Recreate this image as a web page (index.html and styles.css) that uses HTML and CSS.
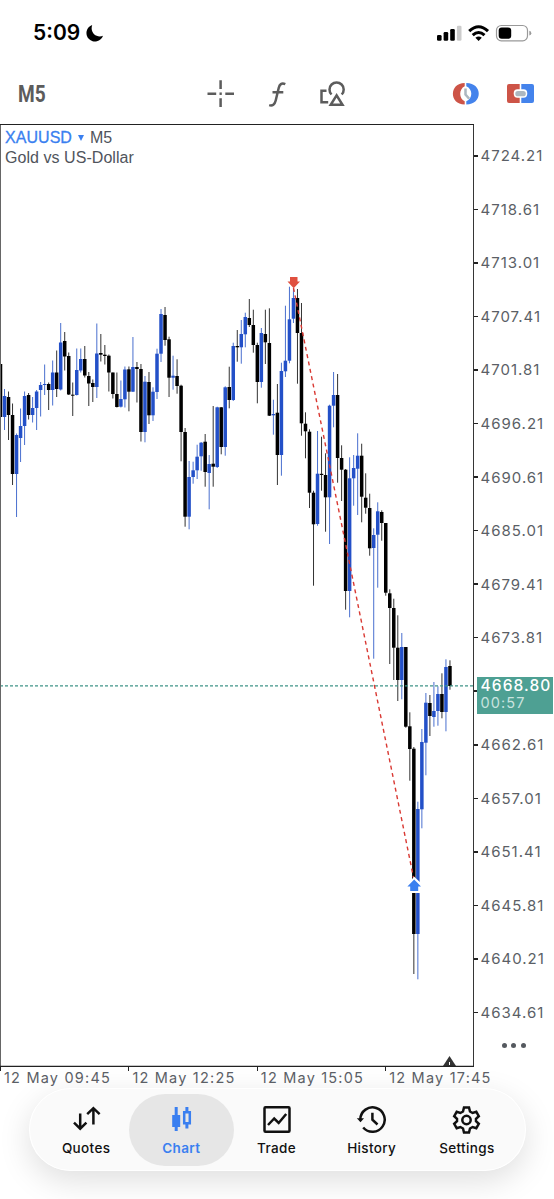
FILE: index.html
```html
<!DOCTYPE html>
<html lang="en">
<head>
    <meta charset="UTF-8">
    <meta name="viewport" content="width=device-width, initial-scale=1.0">
    <title>XAUUSD M5</title>
    <link rel="stylesheet" href="styles.css">
</head>
<body>
    <header class="status">
        <span class="time">5:09</span>
        <svg class="moon" width="18" height="18" viewBox="0 0 18 18"><path d="M6.200 1 A8.500 8.500 0 1 0 17 11.800 C11 14.500 3.500 9 6.200 1Z"/></svg>
        <svg class="signal" width="96" height="18" viewBox="436 24 96 18">
            <rect x="437" y="35" width="4.600" height="5.800" rx="1.300"/>
            <rect x="443.600" y="32" width="4.600" height="8.800" rx="1.300"/>
            <rect x="450.200" y="29" width="4.600" height="11.800" rx="1.300"/>
            <rect x="456.900" y="25.700" width="4.600" height="15.100" rx="1.300" fill="#ccc"/>
            <g fill="none" stroke="#000" stroke-width="3">
                <path d="M469.200 31.200 Q478.600 22.300 488 31.200"/>
                <path d="M472.700 35.200 Q478.600 29.700 484.500 35.200"/>
            </g>
            <path d="M475.400 37.700 Q478.600 35.200 481.800 37.700 L478.600 41Z"/>
            <rect x="496.500" y="25.500" width="31" height="15.300" rx="4.800" fill="none" stroke="#999" stroke-width="1.200"/>
            <rect x="498.700" y="27.500" width="12.500" height="11.300" rx="3"/>
            <path d="M529.300 30.800 Q531.300 31.300 531.300 33.200 Q531.300 35.100 529.300 35.600Z" fill="#999"/>
        </svg>
    </header>

    <div class="toolbar">
        <span class="period">M5</span>
        <svg class="tools" width="350" height="44" viewBox="200 72 350 44">
            <g fill="none" stroke="#5c5c5c" stroke-width="2.500">
                <path d="M220.600 80.300V89M220.600 98.300V107M207.500 93.700H216.200M225.300 93.700H234"/>
                <path d="M219.500 93.700H221.800"/>
                <path d="M285.300 84.200 C281.500 82.500 279.500 84.500 278.700 88 L275.700 100.500 C274.800 104.500 272.500 106.100 269.200 105.100M272.500 92.300H283.300"/>
                <path d="M326.500 90.700H321.500V102.300H328.200"/>
                <path d="M331.500 94.500 A7.100 7.100 0 1 1 341.700 94.500"/>
                <path d="M336.600 95.300 L330.700 104.800 H342.500Z"/>
            </g>
            <path d="M464.700 83 C449 83 449 104.500 464.700 104.500 V101.300 C458.700 98.500 458.700 89 464.700 86.200Z" fill="#cd5447"/>
            <path d="M466.300 83 C483 83 483 104.500 466.300 104.500 V101.300 C473 98.500 473 89 466.300 86.200Z" fill="#4483ec"/>
            <path d="M465.500 88.500V94.500L469.200 98.800" fill="none" stroke="#acb7c0" stroke-width="2.500"/>
            <path d="M509 84H519.700V89.300H517.500Q513.700 89.300 513.700 93.500T517.500 97.700H519.700V103H509Q507 103 507 101V86Q507 84 509 84Z" fill="#cd5447"/>
            <path d="M532 84H521.300V89.300H523.500Q527.300 89.300 527.300 93.500T523.500 97.700H521.300V103H532Q534 103 534 101V86Q534 84 532 84Z" fill="#4483ec"/>
            <rect x="515.300" y="91" width="10.500" height="5.300" rx="2.600" fill="#acb7c0"/>
        </svg>
    </div>

    <main class="chart">
        <div class="plot">
            <svg id="candles" width="474" height="943" viewBox="0 124 474 943"></svg>
            <div class="caption">
                <div><span class="symbol">XAUUSD</span><i class="arrow"></i>M5</div>
                <div>Gold vs US-Dollar</div>
            </div>
        </div>
        <div class="prices">
            <div id="labels" class="labels"></div>
            <div class="current"><b>4668.80</b><span>00:57</span></div>
            <div class="more"><i></i><i></i><i></i></div>
        </div>
    </main>
    <div class="dates">
        <span>12 May 09:45</span>
        <span>12 May 12:25</span>
        <span>12 May 15:05</span>
        <span>12 May 17:45</span>
    </div>

    <nav class="tabs">
        <div class="tab">
            <svg width="30" height="30" viewBox="0 0 30 30"><path d="M9.200 8.500V23.500M3 17.700L9.200 23.700L15.400 17.700M22.400 19.500V3.500M16.200 9.200L22.400 3.200L28.600 9.200"/></svg>
            <span>Quotes</span>
        </div>
        <div class="tab active">
            <svg width="30" height="30" viewBox="0 0 30 30"><path d="M10.200 2V26M20.900 2V6M20.900 19V23.500" class="wick"/><path d="M6.200 10H14.200V22H6.200Z" class="solid"/><path d="M18.200 7.200H23.800V18.300H18.200Z"/></svg>
            <span>Chart</span>
        </div>
        <div class="tab">
            <svg width="30" height="30" viewBox="0 0 30 30"><rect x="3.500" y="2.300" width="25" height="24.500" rx="1"/><path d="M7 20L13.200 13.500L17.700 18L25.200 9"/></svg>
            <span>Trade</span>
        </div>
        <div class="tab">
            <svg width="30" height="30" viewBox="0 0 30 30"><path d="M4.300 14.200A12.200 12.200 0 1 1 7.200 22.500M16.400 7.800V14.600L21.500 19.500"/><path d="M.8 13.200H8L4.500 17.200Z" class="solid"/></svg>
            <span>History</span>
        </div>
        <div class="tab">
            <svg width="30" height="30" viewBox="0 0 30 30"><path d="M13 2.500H18L19 6.500L21.600 8L25.300 6.800L27.800 11.200L25 13.800V16.200L27.800 18.800L25.300 23.200L21.600 22L19 23.500L18 27.500H13L12 23.500L9.400 22L5.700 23.200L3.200 18.800L6 16.200V13.800L3.200 11.200L5.700 6.800L9.400 8L12 6.500Z"/><circle cx="15.500" cy="15" r="4.200"/></svg>
            <span>Settings</span>
        </div>
    </nav>

    <script src="chart.js"></script>
</body>
</html>
```

FILE: styles.css
```css
* { box-sizing: border-box; }

body {
    margin: 0;
    width: 554px;
    height: 1199px;
    overflow: hidden;
    background: #fff;
    font-family: Inter, "Liberation Sans", sans-serif;
}

svg { display: block; }

.status {
    display: flex;
    align-items: center;
    height: 66px;
    padding: 0 22px 0 33px;
}
.time {
    font-size: 21px;
    font-weight: 600;
    line-height: 68px;
}
.moon { margin-left: 6px; }
.signal { margin-left: auto; }

.toolbar {
    display: flex;
    align-items: center;
    height: 58px;
    padding: 6px 4px 8px 18px;
}
.period {
    font: bold 23px Roboto, sans-serif;
    color: #5c5c5c;
    transform: scaleX(.83);
    transform-origin: left;
}
.tools { margin-left: auto; }

.chart {
    display: flex;
    height: 943px;
}
.plot {
    position: relative;
    width: 474px;
}
.caption {
    position: absolute;
    left: 5px;
    top: 4px;
    font: 16px/20px "Liberation Sans", sans-serif;
    letter-spacing: .05px;
    color: #50545c;
}
.symbol {
    color: #3a7ff0;
    -webkit-text-stroke: .3px #3a7ff0;
}
.arrow {
    display: inline-block;
    margin: 0 6px 2px 6px;
    border: solid transparent;
    border-width: 6px 3px 0;
    border-top-color: #3a7ff0;
}

.prices {
    position: relative;
    width: 80px;
}
.labels {
    padding-top: 5px;
}
.labels div {
    display: flex;
    align-items: center;
    height: 53.560px;
    font-size: 15px;
    letter-spacing: 1px;
    color: #5b5f66;
}
.labels div::before {
    content: "";
    width: 4px;
    height: 1.500px;
    margin-right: 2.500px;
    background: #222;
}
.current {
    position: absolute;
    left: 2.500px;
    top: 552.500px;
    width: 76px;
    height: 37.500px;
    padding: 0 4px;
    background: #4ea093;
    color: #fff;
    letter-spacing: 1.100px;
}
.current b {
    display: block;
    font-size: 15.500px;
    font-weight: 450;
    line-height: 18px;
}
.current span {
    display: block;
    font-size: 14.500px;
    line-height: 16px;
    color: #c9e3df;
}
.more {
    position: absolute;
    left: 28px;
    top: 919px;
    display: flex;
    gap: 4.300px;
}
.more i {
    width: 5px;
    height: 5px;
    border-radius: 50%;
    background: #55595f;
}

.dates {
    display: flex;
    height: 21px;
}
.dates span {
    width: 128.400px;
    flex: none;
    padding-left: 4px;
    font-size: 14.500px;
    line-height: 21px;
    letter-spacing: 1.200px;
    color: #5b5f66;
    white-space: nowrap;
    background: linear-gradient(#222, #222) no-repeat 0 0 / 1.300px 4px;
}

.tabs {
    display: grid;
    grid-template-columns: repeat(5, 95.200px);
    width: 497.500px;
    height: 83px;
    margin-left: 28.500px;
    padding: 5.500px 10px;
    border-radius: 42px;
    background: #fafafa;
    box-shadow: 0 10px 32px rgba(0, 0, 0, .13), inset 0 0 0 1px #fff;
}
.tab {
    display: flex;
    flex-direction: column;
    align-items: center;
    height: 72px;
    margin: 0 -5px;
    padding-top: 11.500px;
    border-radius: 36px;
    font-size: 13.500px;
    font-weight: 500;
    letter-spacing: .35px;
    color: #111;
}
.tab svg {
    margin-left: -1px;
    fill: none;
    stroke: currentColor;
    stroke-width: 2.500;
}
.tab .solid {
    fill: currentColor;
    stroke: none;
}
.tab .wick { stroke-width: 3; }
.tab span {
    margin-top: 3.500px;
    line-height: 18px;
}
.tab.active {
    background: #e6e6e6;
    color: #3a7ff0;
    font-weight: 600;
}
```

FILE: chart.js
```js
// colour (1 = up, 0 = down), high, body top, body bottom, low
const candles = [
    [0,364,364,417,417],[1,389,396,417,430],[0,391.5,397,415,440],[0,403.5,415,474,485],
    [1,433.5,435,474,517],[1,408.5,426,438,462],[1,391.5,396,426,445],[0,393,395,415,419.5],
    [1,397,408,415,422.5],[1,390,391.5,408,430],[1,382,385,390,416.5],[1,364.5,384,385,395],
    [0,382.5,384,390,410],[1,360.5,372.5,390,405.5],[0,350.5,372.5,389,397],[1,323,342.5,389.5,390.5],
    [0,332,341,356.5,370.5],[0,352.5,356,394.5,395],[0,382.5,394.7,395.7,416],[1,348.5,370,395,395.5],
    [1,348.5,359,370.5,372.5],[0,346,359,375.5,377.5],[0,372,376,383.5,406],[0,379.5,383,387,402],
    [1,323.5,353.5,387,398],[0,334,353,354.7,361.5],[0,345,354.7,356,364.5],[0,354.5,355.7,372.5,391.5],
    [0,372.5,372.5,394,398.5],[0,372.5,394,407,407.5],[1,380.5,399,406.7,407.5],[1,366.5,369.5,399.3,407.5],
    [0,366.5,369.3,391.7,411.3],[1,337,367,391.7,392],[0,362,367,369,402.5],[0,364,369,432,441.5],
    [1,376,381.7,432,442.3],[0,372,382,415.3,424],[1,387.3,391.7,415.3,421],[1,348.7,353.7,392,399],
    [1,309,314,353.7,362],[0,307,315,340,345.7],[0,336.7,339.3,377.7,397],[1,355.7,375.7,377.7,389.7],
    [0,359.3,376,386,393.7],[0,384.7,385.7,432,461.3],[0,428,432,516.7,526.7],[1,461,477,516.7,529.3],
    [1,461.7,470.3,477,483.7],[1,444.7,456.7,470.3,479],[1,442,442.7,456.3,470.7],[0,434,441.7,472,486.7],
    [1,455,464,473,509.3],[0,406,463.7,466.7,486.7],[1,406.7,407.3,467,468],[0,407,407.3,447,454.3],
    [1,386.3,387.3,447,455.7],[0,366.7,387,400,408.3],[1,342.7,346,400,401],[0,330,346,347.3,361.7],
    [1,320,334,347.3,363.7],[1,312.7,317,334.3,347.3],[0,299,318,325,327],[0,309.7,325,345,352.7],
    [0,342.7,345,382,403.3],[1,328,333,382,387.7],[0,309.7,334,342.3,364],[0,308.3,343,415.7,416],
    [1,399.7,414,415.3,434.7],[0,384,412.7,455,485],[1,362.7,371,455,475.7],[1,305.7,360.7,371.3,377],
    [1,286.7,319.3,360.7,363.3],[1,288.7,298,318.7,323],[0,289,298,333,383.7],[0,303,333,423.3,435.7],
    [0,412.3,423.7,431.3,458.3],[0,429.3,431.7,492.7,508],[0,490.7,492.7,524.3,585.7],[1,431,473.7,524,525.7],
    [0,436.7,473.8,475,490.7],[0,453.3,475,497.3,531.7],[1,404.7,405.7,497.3,544],[1,372,395,405.7,427.3],
    [0,374,395,458,482.7],[0,445.3,458,469.7,501],[0,469,469.7,591,609.7],[1,457.3,478.3,591,617.3],
    [1,455,468,478.3,505.7],[1,433.3,455.7,468.7,515],[0,443.7,455.7,496.7,522.3],[0,473.3,497.7,507.7,513.7],
    [0,493.7,508,548.3,555.7],[1,528.3,535,548,658.7],[1,502.3,511.3,534.7,587.7],[0,510.3,512,523,540.7],
    [0,523,523,592.7,595.7],[0,589.3,593.3,608,664],[0,598.7,608,647.7,680],[0,615.3,647.7,680,701],
    [1,633,647,680,699.3],[0,647,647,726.7,727.7],[0,712.3,726.3,749,780.7],[0,747,748.7,934,974],
    [1,801.7,809,934,979.3],[1,729,742,809.3,828.3],[1,693,702.7,742.7,775.3],[0,695,703,716,736],
    [1,682,711,717,726.7],[1,686.3,694,711,725.7],[0,673.3,694,712,718.3],[1,659.3,667,712,731.3],
    [0,660.3,666,686,689.7]
];

let svg = '';
candles.forEach(([up, high, top, bottom, low], i) => {
    let x = 0.5 + i * 4.013;
    svg += `<rect x="${x - 0.5}" y="${high}" width="1" height="${low - high}" fill="${up ? '#4a70cf' : '#333'}"/>`;
    svg += `<rect x="${x - 1.75}" y="${top}" width="3.5" height="${bottom - top}" fill="${up ? '#2350c8' : '#000'}"/>`;
});

// current price, trade line and its two ends
svg += '<path d="M0 685.800H474" stroke="#3f9488" stroke-width="1.300" stroke-dasharray="3 2"/>';
svg += '<path d="M293.500 288L414 880" stroke="#d93832" stroke-width="1.400" stroke-dasharray="4 3.500"/>';
svg += '<path d="M290 277H297.500V281.500H300L293.700 288.300L287.500 281.500H290Z" fill="#e0503f"/>';
svg += '<path d="M407 886L414 876.500L421.500 883.500V893H407Z" fill="#fff"/>';
svg += '<path d="M414.200 879.500L421 886.500H418.200V891H410.200V886.500H407.400Z" fill="#3a7ff0"/>';
svg += '<path d="M443 1066L449.500 1056L456 1066Z" fill="#333"/><path d="M449.500 1062V1065" stroke="#fff"/>';

// frame
svg += '<path d="M.5 124V1067" stroke="#666"/><path d="M0 124.500H473.700V1066.300H0" fill="none" stroke="#222" stroke-width="1.200"/>';
document.getElementById('candles').innerHTML = svg;

// price scale, the row under the current price keeps only its tick
let labels = document.getElementById('labels');
for (let i = 0; i < 17; i++) {
    let row = document.createElement('div');
    if (i != 10) row.append((4724.21 - i * 5.6).toFixed(2));
    labels.append(row);
}
```
